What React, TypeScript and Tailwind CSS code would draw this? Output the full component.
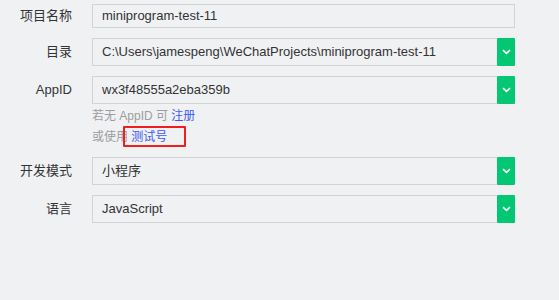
import React from 'react';

const font = { fontFamily: '"Liberation Sans", "Noto Sans CJK SC", sans-serif' };

function Chevron() {
  return (
    <svg width="9" height="6" viewBox="0 0 9 6" fill="none">
      <path d="M1 1.2 L4.5 4.4 L8 1.2" stroke="#ffffff" strokeWidth="1.6" />
    </svg>
  );
}

function Label({ children }: { children: React.ReactNode }) {
  return (
    <div className="w-[92px] shrink-0 pr-[20px] text-right text-[13px] text-[#333333]">
      {children}
    </div>
  );
}

function Select({ value }: { value: string }) {
  return (
    <div className="flex w-[423px] h-[28px]">
      <div className="flex-1 flex items-center px-[9px] border border-[#d2d3d5] border-r-0 text-[13px] text-[#333333] whitespace-nowrap overflow-hidden">
        {value}
      </div>
      <div className="w-[18px] h-full bg-[#04c774] flex items-center justify-center rounded-[1px]">
        <Chevron />
      </div>
    </div>
  );
}

export default function App() {
  return (
    <div className="w-[559px] h-[300px] bg-[#f0f1f3] pt-[4px]" style={font}>
      {/* Project name */}
      <div className="flex items-center">
        <Label>项目名称</Label>
        <div className="w-[423px] h-[24px] flex items-center px-[9px] border border-[#d2d3d5] text-[13px] text-[#333333]">
          miniprogram-test-11
        </div>
      </div>

      {/* Directory */}
      <div className="flex items-center mt-[10px]">
        <Label>目录</Label>
        <Select value="C:\Users\jamespeng\WeChatProjects\miniprogram-test-11" />
      </div>

      {/* AppID */}
      <div className="flex items-center mt-[10px]">
        <Label>AppID</Label>
        <Select value="wx3f48555a2eba359b" />
      </div>

      <div className="pl-[92px] pt-[2px] text-[12px] leading-[21px] text-[#9c9da0]">
        <div>
          若无 AppID 可 <span className="text-[#3d5af1]">注册</span>
        </div>
        <div>
          或使用 <span className="relative text-[#3d5af1]">
            测试号
            <span className="absolute left-[-8px] top-[-4px] w-[63px] h-[21px] border-2 border-[#f01e1e] rounded-[1px]" />
          </span>
        </div>
      </div>

      {/* Mode */}
      <div className="flex items-center mt-[9px]">
        <Label>开发模式</Label>
        <Select value="小程序" />
      </div>

      {/* Language */}
      <div className="flex items-center mt-[10px]">
        <Label>语言</Label>
        <Select value="JavaScript" />
      </div>
    </div>
  );
}
